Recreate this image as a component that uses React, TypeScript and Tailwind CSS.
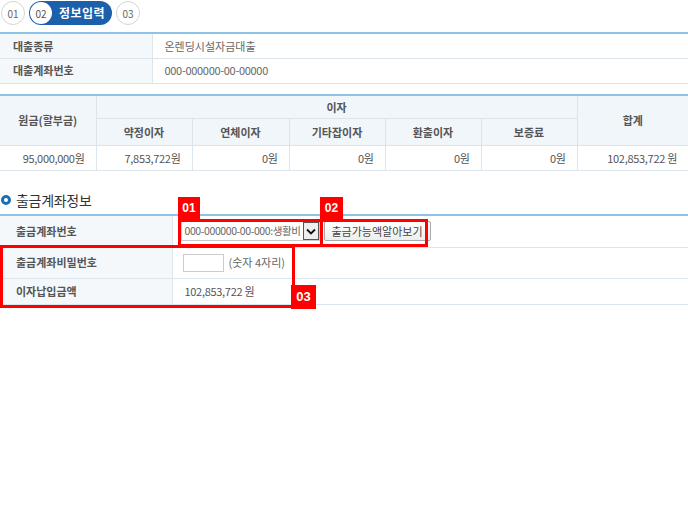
import React from "react";

const font = "font-['Noto_Sans_CJK_KR','Noto_Sans',sans-serif]";

function Steps() {
  return (
    <div className="flex items-center gap-[4px] pl-[1px] pt-[1px] h-[25px]">
      <div className="w-[24px] h-[24px] rounded-full border border-[#d5d5d5] flex items-center justify-center text-[10px] text-[#666]">
        01
      </div>
      <div className="h-[24px] w-[83px] rounded-full bg-[#1c5fab] flex items-center p-[1px]">
        <div className="w-[22px] h-[22px] rounded-full bg-white flex items-center justify-center text-[10px] text-[#555]">
          02
        </div>
        <span className="ml-[7px] text-[12px] font-bold text-white tracking-[0.5px]">정보입력</span>
      </div>
      <div className="w-[24px] h-[24px] rounded-full border border-[#d5d5d5] flex items-center justify-center text-[10px] text-[#666]">
        03
      </div>
    </div>
  );
}

const th = "border-r border-b border-[#dce5ec] bg-[#f1f6fb] text-[11px] font-bold text-[#555] text-center";
const td = "border-r border-b border-[#dce5ec] text-[11px] text-[#555] text-right pr-[11px] tracking-[-0.3px]";

export default function App() {
  return (
    <div className={`w-[688px] h-[517px] bg-white relative ${font}`}>
      <Steps />

      {/* 대출정보 */}
      <table className="mt-[7px] w-full border-collapse border-t-2 border-[#8ec3e8]">
        <tbody>
          <tr className="h-[25px]">
            <td className="w-[152px] bg-[#f4f8fb] border-r border-b border-[#dce5ec] pl-[13px] text-[11px] font-bold text-[#555]">대출종류</td>
            <td className="border-b border-[#dce5ec] pl-[12px] text-[11px] text-[#666]">온렌딩시설자금대출</td>
          </tr>
          <tr className="h-[25px]">
            <td className="w-[152px] bg-[#f4f8fb] border-r border-b border-[#dce5ec] pl-[13px] text-[11px] font-bold text-[#555]">대출계좌번호</td>
            <td className="border-b border-[#dce5ec] pl-[12px] text-[11px] text-[#666] tracking-[-0.3px]">000-000000-00-00000</td>
          </tr>
        </tbody>
      </table>

      {/* 원금/이자 */}
      <table className="mt-[10px] w-full border-collapse border-t-2 border-[#8ec3e8] table-fixed">
        <colgroup>
          <col className="w-[96px]" />
          <col className="w-[96px]" />
          <col className="w-[97px]" />
          <col className="w-[96px]" />
          <col className="w-[96px]" />
          <col className="w-[96px]" />
          <col />
        </colgroup>
        <thead>
          <tr className="h-[24px]">
            <th rowSpan={2} className={th}>원금(할부금)</th>
            <th colSpan={5} className={th}>이자</th>
            <th rowSpan={2} className={`${th} border-r-0`}>합계</th>
          </tr>
          <tr className="h-[27px]">
            <th className={th}>약정이자</th>
            <th className={th}>연체이자</th>
            <th className={th}>기타잡이자</th>
            <th className={th}>환출이자</th>
            <th className={th}>보증료</th>
          </tr>
        </thead>
        <tbody>
          <tr className="h-[25px]">
            <td className={td}>95,000,000원</td>
            <td className={td}>7,853,722원</td>
            <td className={td}>0원</td>
            <td className={td}>0원</td>
            <td className={td}>0원</td>
            <td className={td}>0원</td>
            <td className={`${td} border-r-0`}>102,853,722 원</td>
          </tr>
        </tbody>
      </table>

      {/* 출금계좌정보 */}
      <div className="mt-[19px] flex items-center h-[20px] pl-[1px]">
        <span className="w-[10px] h-[10px] rounded-full border-[3px] border-[#1a6fb5] bg-white mr-[5px]" />
        <span className="text-[14px] text-[#333] tracking-[-0.3px]">출금계좌정보</span>
      </div>

      <table className="mt-[4px] w-full border-collapse border-t-2 border-[#8ec3e8]">
        <tbody>
          <tr className="h-[32px]">
            <td className="w-[172px] bg-[#f4f8fb] border-r border-b border-[#dce5ec] pl-[16px] text-[11px] font-bold text-[#555]">출금계좌번호</td>
            <td className="border-b border-[#dce5ec] pl-[8px]">
              <div className="flex items-center gap-[4px]">
                <div className="flex items-center h-[20px] w-[139px] border border-[#c8c8c8] overflow-hidden">
                  <span className="flex-1 min-w-0 whitespace-nowrap overflow-hidden pl-[3px] text-[10.5px] text-[#666] tracking-[-0.4px]">
                    000-000000-00-000:생활비
                  </span>
                  <span className="shrink-0 w-[16px] h-[18px] border border-[#555] bg-[#eee] flex items-center justify-center">
                    <svg width="10" height="7" viewBox="0 0 10 7">
                      <path d="M1 1.5 L5 5.5 L9 1.5" fill="none" stroke="#111" strokeWidth="1.8" />
                    </svg>
                  </span>
                </div>
                <button className="h-[20px] px-[7px] border border-[#aaa] bg-gradient-to-b from-white to-[#eee] text-[11px] text-[#444] rounded-[2px] whitespace-nowrap">
                  출금가능액알아보기
                </button>
              </div>
            </td>
          </tr>
          <tr className="h-[31px]">
            <td className="bg-[#f4f8fb] border-r border-b border-[#dce5ec] pl-[16px] text-[11px] font-bold text-[#555]">출금계좌비밀번호</td>
            <td className="border-b border-[#dce5ec] pl-[10px]">
              <div className="flex items-center gap-[5px]">
                <div className="w-[41px] h-[18px] border border-[#ccc]" />
                <span className="text-[11px] text-[#666]">(숫자 4자리)</span>
              </div>
            </td>
          </tr>
          <tr className="h-[26px]">
            <td className="bg-[#f4f8fb] border-r border-b border-[#dce5ec] pl-[16px] text-[11px] font-bold text-[#555]">이자납입금액</td>
            <td className="border-b border-[#dce5ec] pl-[12px] text-[11px] text-[#555] tracking-[-0.3px]">102,853,722 원</td>
          </tr>
        </tbody>
      </table>

      {/* annotation overlays */}
      <div className="absolute left-[178px] top-[219px] w-[145px] h-[28px] border-[3px] border-[#f00]" />
      <div className="absolute left-[178px] top-[197px] w-[22px] h-[22px] bg-[#f00] text-white text-[12px] font-bold flex items-center justify-center font-['Liberation_Sans',sans-serif]">01</div>
      <div className="absolute left-[320px] top-[219px] w-[108px] h-[28px] border-[3px] border-[#f00]" />
      <div className="absolute left-[320px] top-[197px] w-[23px] h-[22px] bg-[#f00] text-white text-[12px] font-bold flex items-center justify-center font-['Liberation_Sans',sans-serif]">02</div>
      <div className="absolute left-0 top-[245px] w-[295px] h-[63px] border-[3px] border-[#f00]" />
      <div className="absolute left-[291px] top-[285px] w-[25px] h-[24px] bg-[#f00] text-white text-[13px] font-bold flex items-center justify-center font-['Liberation_Sans',sans-serif]">03</div>
    </div>
  );
}
